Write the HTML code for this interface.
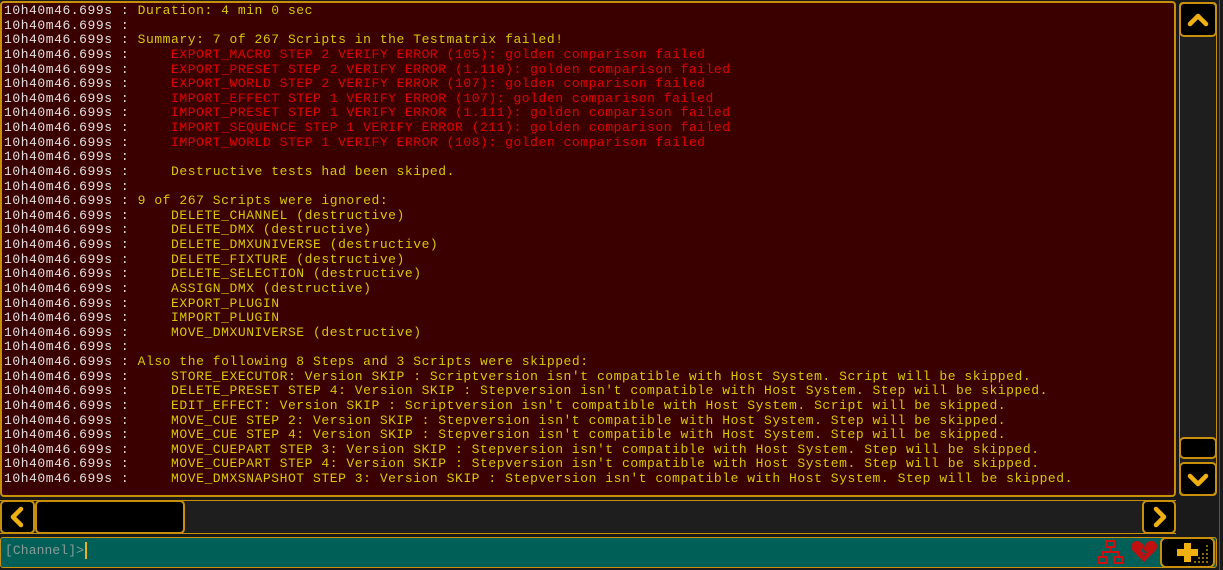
<!DOCTYPE html>
<html><head><meta charset="utf-8"><style>
html,body{margin:0;padding:0;background:#1a1a1a;width:1223px;height:570px;overflow:hidden;position:relative}
.log{position:absolute;left:0;top:1px;width:1172px;height:492px;background:#3a0000;border:2px solid #c8900a;border-radius:4px}
.txt{position:absolute;left:2px;top:1px;font-family:"Liberation Mono",monospace;font-size:13px;letter-spacing:0.55px;line-height:14.63px;white-space:pre;color:#d8c800}
.t{color:#e0e0e0}.r{color:#e00000}
.btn{position:absolute;background:#000;border:2px solid #c8900a;border-radius:5px;box-sizing:border-box}
</style></head><body>
<div class="log"><div class="txt"><span class="t">10h40m46.699s :</span> Duration: 4 min 0 sec
<span class="t">10h40m46.699s :</span>
<span class="t">10h40m46.699s :</span> Summary: 7 of 267 Scripts in the Testmatrix failed!
<span class="t">10h40m46.699s :</span> <span class="r">    EXPORT_MACRO STEP 2 VERIFY ERROR (105): golden comparison failed</span>
<span class="t">10h40m46.699s :</span> <span class="r">    EXPORT_PRESET STEP 2 VERIFY ERROR (1.110): golden comparison failed</span>
<span class="t">10h40m46.699s :</span> <span class="r">    EXPORT_WORLD STEP 2 VERIFY ERROR (107): golden comparison failed</span>
<span class="t">10h40m46.699s :</span> <span class="r">    IMPORT_EFFECT STEP 1 VERIFY ERROR (107): golden comparison failed</span>
<span class="t">10h40m46.699s :</span> <span class="r">    IMPORT_PRESET STEP 1 VERIFY ERROR (1.111): golden comparison failed</span>
<span class="t">10h40m46.699s :</span> <span class="r">    IMPORT_SEQUENCE STEP 1 VERIFY ERROR (211): golden comparison failed</span>
<span class="t">10h40m46.699s :</span> <span class="r">    IMPORT_WORLD STEP 1 VERIFY ERROR (108): golden comparison failed</span>
<span class="t">10h40m46.699s :</span>
<span class="t">10h40m46.699s :</span>     Destructive tests had been skiped.
<span class="t">10h40m46.699s :</span>
<span class="t">10h40m46.699s :</span> 9 of 267 Scripts were ignored:
<span class="t">10h40m46.699s :</span>     DELETE_CHANNEL (destructive)
<span class="t">10h40m46.699s :</span>     DELETE_DMX (destructive)
<span class="t">10h40m46.699s :</span>     DELETE_DMXUNIVERSE (destructive)
<span class="t">10h40m46.699s :</span>     DELETE_FIXTURE (destructive)
<span class="t">10h40m46.699s :</span>     DELETE_SELECTION (destructive)
<span class="t">10h40m46.699s :</span>     ASSIGN_DMX (destructive)
<span class="t">10h40m46.699s :</span>     EXPORT_PLUGIN
<span class="t">10h40m46.699s :</span>     IMPORT_PLUGIN
<span class="t">10h40m46.699s :</span>     MOVE_DMXUNIVERSE (destructive)
<span class="t">10h40m46.699s :</span>
<span class="t">10h40m46.699s :</span> Also the following 8 Steps and 3 Scripts were skipped:
<span class="t">10h40m46.699s :</span>     STORE_EXECUTOR: Version SKIP : Scriptversion isn't compatible with Host System. Script will be skipped.
<span class="t">10h40m46.699s :</span>     DELETE_PRESET STEP 4: Version SKIP : Stepversion isn't compatible with Host System. Step will be skipped.
<span class="t">10h40m46.699s :</span>     EDIT_EFFECT: Version SKIP : Scriptversion isn't compatible with Host System. Script will be skipped.
<span class="t">10h40m46.699s :</span>     MOVE_CUE STEP 2: Version SKIP : Stepversion isn't compatible with Host System. Step will be skipped.
<span class="t">10h40m46.699s :</span>     MOVE_CUE STEP 4: Version SKIP : Stepversion isn't compatible with Host System. Step will be skipped.
<span class="t">10h40m46.699s :</span>     MOVE_CUEPART STEP 3: Version SKIP : Stepversion isn't compatible with Host System. Step will be skipped.
<span class="t">10h40m46.699s :</span>     MOVE_CUEPART STEP 4: Version SKIP : Stepversion isn't compatible with Host System. Step will be skipped.
<span class="t">10h40m46.699s :</span>     MOVE_DMXSNAPSHOT STEP 3: Version SKIP : Stepversion isn't compatible with Host System. Step will be skipped.</div></div>

<div style="position:absolute;left:1179px;top:2px;width:38px;height:494px;background:#1e1e1e;border:1px solid #c8900a;border-radius:4px;box-sizing:border-box"></div>
<div class="btn" style="left:1179px;top:2px;width:38px;height:35px"><svg width="34" height="31" viewBox="0 0 34 31"><path d="M9 20 L17 12 L25 20" fill="none" stroke="#f0b010" stroke-width="4.5" stroke-linecap="round" stroke-linejoin="round"/></svg></div>
<div class="btn" style="left:1179px;top:437px;width:38px;height:22px"></div>
<div class="btn" style="left:1179px;top:462px;width:38px;height:34px"><svg width="34" height="30" viewBox="0 0 34 30"><path d="M9 12 L17 20 L25 12" fill="none" stroke="#f0b010" stroke-width="4.5" stroke-linecap="round" stroke-linejoin="round"/></svg></div>
<div style="position:absolute;left:1219px;top:0;width:1px;height:570px;background:#555"></div>

<div style="position:absolute;left:0;top:500px;width:1176px;height:34px;background:#1e1e1e;border-top:1px solid #c8900a;border-bottom:1px solid #c8900a;box-sizing:border-box"></div>
<div class="btn" style="left:0;top:500px;width:35px;height:34px"><svg width="31" height="30" viewBox="0 0 31 30"><path d="M19 7 L11 15 L19 23" fill="none" stroke="#f0b010" stroke-width="4.5" stroke-linecap="round" stroke-linejoin="round"/></svg></div>
<div class="btn" style="left:35px;top:500px;width:150px;height:34px"></div>
<div class="btn" style="left:1142px;top:500px;width:34px;height:34px"><svg width="30" height="30" viewBox="0 0 30 30"><path d="M12 7 L20 15 L12 23" fill="none" stroke="#f0b010" stroke-width="4.5" stroke-linecap="round" stroke-linejoin="round"/></svg></div>

<div style="position:absolute;left:0;top:537px;width:1217px;height:31px;background:#006058;border:1px solid #c8900a;border-radius:3px;box-sizing:border-box"></div>
<div style="position:absolute;left:5px;top:543px;font-family:'Liberation Mono',monospace;font-size:13px;letter-spacing:0.1px;color:#8a9a98">[Channel]&gt;</div>
<div style="position:absolute;left:85px;top:542px;width:2px;height:17px;background:#f0b010"></div>
<svg style="position:absolute;left:1097px;top:539px" width="28" height="26" viewBox="0 0 28 26"><g fill="none" stroke="#d01010" stroke-width="2"><rect x="9" y="2" width="8" height="6"/><rect x="2" y="18" width="8" height="6"/><rect x="17" y="18" width="8" height="6"/><path d="M13 8 V13 M6 18 V13 H21 V18"/></g></svg>
<svg style="position:absolute;left:1130px;top:540px" width="28" height="24" viewBox="0 0 28 24"><path d="M14 22 L3 11 C-1 6 3 0 8 1 C11 2 13 4 14 6 L11 11 L15 13 L12 19 L17 12 L13 10 L15 5 C17 2 20 0 23 1 C28 3 28 8 25 11 Z" fill="#c01010"/></svg>
<div class="btn" style="left:1160px;top:537px;width:55px;height:31px;border-radius:6px"><svg width="51" height="27" viewBox="0 0 51 27"><path d="M22 4 h7 v6 h7 v7 h-7 v6 h-7 v-6 h-7 v-7 h7 z" fill="#f0b010"/><g fill="#8a6a10"><rect x="44" y="6" width="2" height="2"/><rect x="44" y="10" width="2" height="2"/><rect x="40" y="14" width="2" height="2"/><rect x="44" y="14" width="2" height="2"/><rect x="36" y="18" width="2" height="2"/><rect x="40" y="18" width="2" height="2"/><rect x="44" y="18" width="2" height="2"/><rect x="32" y="22" width="2" height="2"/><rect x="36" y="22" width="2" height="2"/><rect x="40" y="22" width="2" height="2"/><rect x="44" y="22" width="2" height="2"/></g></svg></div>
</body></html>
